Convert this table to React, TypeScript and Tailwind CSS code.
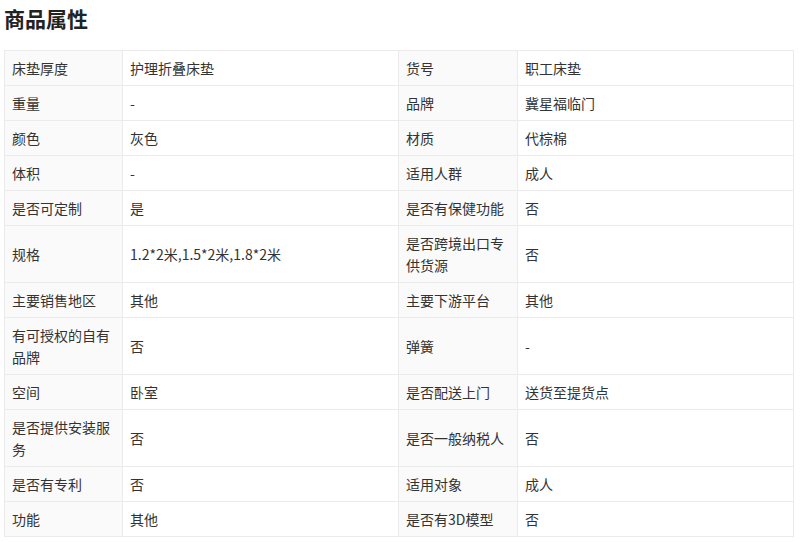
import React from 'react';

type Attr = [string, string];

const ROWS: [Attr, Attr][] = [
  [['床垫厚度', '护理折叠床垫'], ['货号', '职工床垫']],
  [['重量', '-'], ['品牌', '冀星福临门']],
  [['颜色', '灰色'], ['材质', '代棕棉']],
  [['体积', '-'], ['适用人群', '成人']],
  [['是否可定制', '是'], ['是否有保健功能', '否']],
  [['规格', '1.2*2米,1.5*2米,1.8*2米'], ['是否跨境出口专供货源', '否']],
  [['主要销售地区', '其他'], ['主要下游平台', '其他']],
  [['有可授权的自有品牌', '否'], ['弹簧', '-']],
  [['空间', '卧室'], ['是否配送上门', '送货至提货点']],
  [['是否提供安装服务', '否'], ['是否一般纳税人', '否']],
  [['是否有专利', '否'], ['适用对象', '成人']],
  [['功能', '其他'], ['是否有3D模型', '否']],
];

const labelCls =
  'border border-[#ebebeb] bg-[#fafafa] px-[7px] py-[6px] align-middle text-left font-normal';
const valueCls = 'border border-[#ebebeb] bg-white px-[7px] py-[6px] align-middle';

export default function App() {
  return (
    <div
      className="w-[800px] h-[542px] bg-white text-[#333] overflow-hidden"
      style={{ fontFamily: '"Microsoft YaHei", "Noto Sans CJK SC", "Noto Sans", sans-serif' }}
    >
      <h2 className="pl-[4px] pt-[3px] text-[21px] font-bold leading-[30px] text-[#222]">商品属性</h2>

      <div className="pl-[4px] pt-[17px]">
        <table className="w-[789px] table-fixed border-collapse text-[14px] leading-[22px]">
          <colgroup>
            <col className="w-[118px]" />
            <col className="w-[276px]" />
            <col className="w-[119px]" />
            <col className="w-[276px]" />
          </colgroup>
          <tbody>
            {ROWS.map(([left, right], i) => (
              <tr key={i}>
                <th className={labelCls}>{left[0]}</th>
                <td className={valueCls}>{left[1]}</td>
                <th className={labelCls}>{right[0]}</th>
                <td className={valueCls}>{right[1]}</td>
              </tr>
            ))}
          </tbody>
        </table>
      </div>
    </div>
  );
}
